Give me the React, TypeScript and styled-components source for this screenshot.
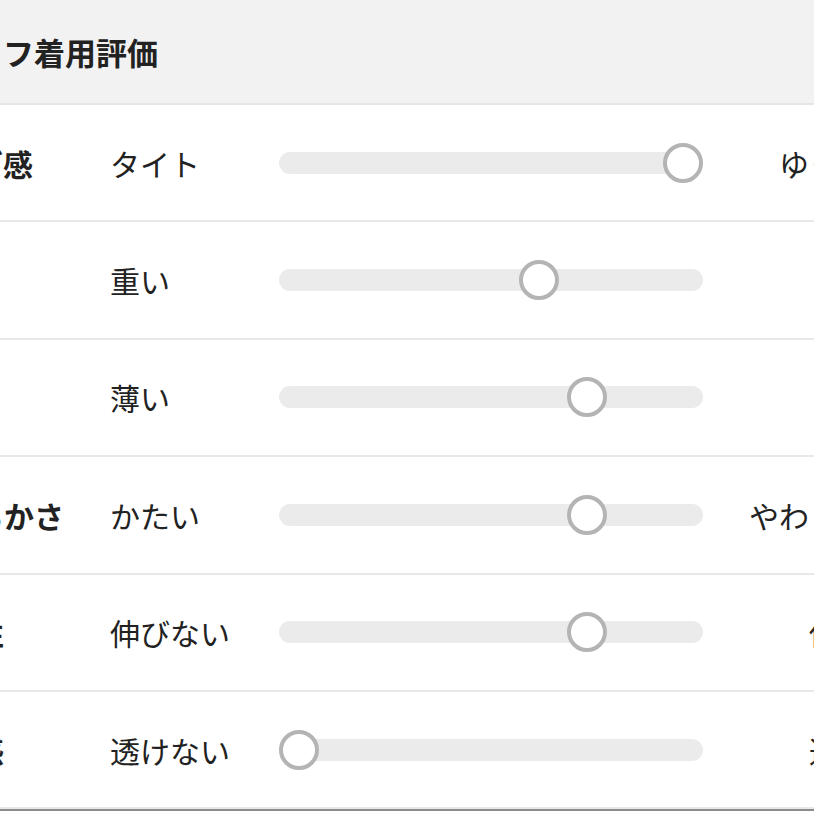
import React, { FunctionComponent } from 'react';
import styled, { createGlobalStyle } from 'styled-components';

const GlobalStyle = createGlobalStyle`
	html, body {
		margin: 0;
		padding: 0;
		background: #ffffff;
		overflow: hidden;
	}
	body {
		font-family: "Noto Sans CJK JP", "Noto Sans", sans-serif;
		color: #222222;
	}
`;

type Rating = {
	label: string;
	low: string;
	high: string;
	value: number;
};

const ratings: Rating[] = [
	{ label: 'サイズ感', low: 'タイト', high: 'ゆったり', value: 1 },
	{ label: '重さ', low: '重い', high: '軽い', value: 0.625 },
	{ label: '厚さ', low: '薄い', high: '厚い', value: 0.75 },
	{ label: 'やわらかさ', low: 'かたい', high: 'やわらかい', value: 0.75 },
	{ label: '伸縮性', low: '伸びない', high: '伸びる', value: 0.75 },
	{ label: '透け感', low: '透けない', high: '透ける', value: 0 },
];

const THUMB = 40;

const Page = styled.div`
	width: 1000px;
	margin-left: -90px;
`;

const Header = styled.div`
	height: 103px;
	display: flex;
	align-items: center;
	background: #f2f2f2;
	border-bottom: 2px solid #e6e6e6;
`;

const Title = styled.h2`
	margin: 0;
	font-size: 31px;
	font-weight: 700;
	letter-spacing: 0;
`;

const Table = styled.div`
	border-bottom: 2px solid #8c8c8c;
`;

const Row = styled.div`
	box-sizing: border-box;
	height: 117.4px;
	display: grid;
	grid-template-columns: 196px 169px 424px 196px;
	align-items: center;
	padding-left: 4px;
	border-bottom: 2px solid #e8e8e8;
`;

const Label = styled.div`
	font-size: 30px;
	font-weight: 700;
	white-space: nowrap;
`;

const End = styled.div<{ $align: 'left' | 'right' }>`
	font-size: 30px;
	font-weight: 400;
	white-space: nowrap;
	text-align: ${(p) => p.$align};
`;

const Track = styled.div`
	position: relative;
	height: 22px;
	border-radius: 11px;
	background: #ebebeb;
`;

const Thumb = styled.span`
	position: absolute;
	top: 50%;
	width: ${THUMB}px;
	height: ${THUMB}px;
	box-sizing: border-box;
	margin-top: -${THUMB / 2}px;
	border-radius: 50%;
	border: 4px solid #b4b4b4;
	background: #ffffff;
`;

const Slider: FunctionComponent<{ value: number }> = ({ value }) => (
	<Track>
		<Thumb style={{ left: `calc((100% - ${THUMB}px) * ${value})` }} />
	</Track>
);

const App: FunctionComponent = () => {
	return (
		<Page>
			<GlobalStyle />
			<Header>
				<Title>スタッフ着用評価</Title>
			</Header>
			<Table>
				{ratings.map((r) => (
					<Row key={r.label}>
						<Label>{r.label}</Label>
						<End $align="left">{r.low}</End>
						<Slider value={r.value} />
						<End $align="right">{r.high}</End>
					</Row>
				))}
			</Table>
		</Page>
	);
};

export default App;
